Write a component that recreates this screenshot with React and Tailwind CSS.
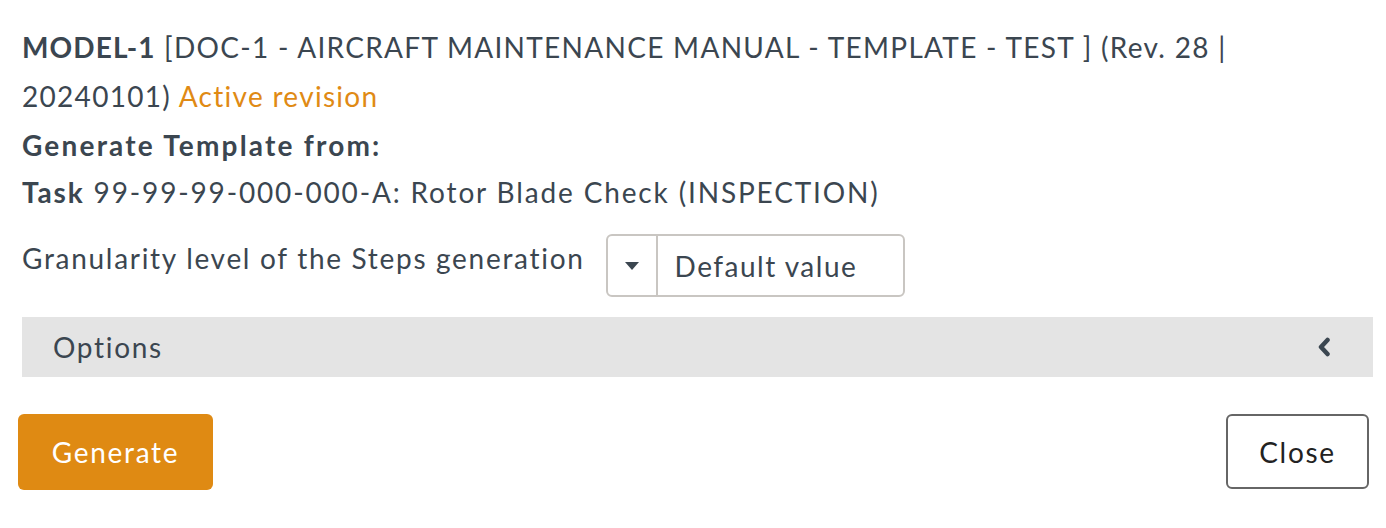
import React from "react";

export default function App() {
  return (
    <div
      className="w-[1386px] h-[528px] bg-white text-[#3b4650] overflow-hidden tracking-[1.7px]"
      style={{ fontFamily: "Lato, 'Open Sans', sans-serif" }}
    >
      <div className="pl-[22px] pr-[13px] pt-[23px]">
        <div className="text-[28px] leading-[49px] pr-[30px] tracking-[1.3px]">
          <span className="font-bold tracking-[1.1px]">MODEL-1</span> [DOC-1 - AIRCRAFT MAINTENANCE MANUAL - TEMPLATE - TEST ] (Rev. 28 |{" "}
          20240101) <span className="text-[#e08a14]">Active revision</span>
        </div>
        <div className="text-[28px] leading-[48px] font-bold tracking-[2.2px]">Generate Template from:</div>
        <div className="text-[28px] leading-[47px] tracking-[1.85px]">
          <span className="font-bold">Task</span> 99-99-99-000-000-A: Rotor Blade Check (INSPECTION)
        </div>
        <div className="flex items-start mt-[18px]">
          <div className="text-[28px] leading-[48px]">Granularity level of the Steps generation</div>
          <div className="ml-[21px] flex h-[63px] w-[299px] border-2 border-[#c9c6c2] rounded-[6px]">
            <div className="w-[50px] border-r-2 border-[#c9c6c2] flex items-center justify-center">
              <svg width="16" height="10" viewBox="0 0 16 10">
                <path d="M1 1 L15 1 L8 9 Z" fill="#3b4650" />
              </svg>
            </div>
            <div className="flex items-center pl-[17px] text-[28px] tracking-[1.5px]">Default value</div>
          </div>
        </div>
        <div className="mt-[20px] h-[60px] bg-[#e4e4e4] flex items-center justify-between pl-[31px] pr-[42px]">
          <span className="text-[28px]">Options</span>
          <svg width="14" height="20" viewBox="0 0 14 20">
            <path d="M10.5 3 L4 10 L10.5 17" stroke="#3b4650" strokeWidth="4.5" fill="none" strokeLinecap="round" strokeLinejoin="round" />
          </svg>
        </div>
      </div>
      <div className="flex justify-between pl-[18px] pr-[17px] mt-[37px]">
        <button className="w-[195px] h-[76px] bg-[#df8a13] rounded-[6px] text-white text-[28px]">Generate</button>
        <button className="w-[143px] h-[75px] bg-white border-2 border-[#666] rounded-[6px] text-[#222] text-[28px]">Close</button>
      </div>
    </div>
  );
}
